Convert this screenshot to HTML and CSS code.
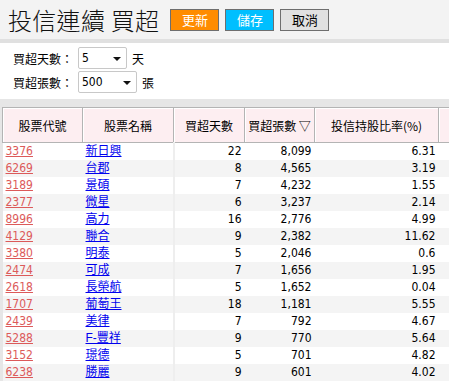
FILE: index.html
```html
<!DOCTYPE html>
<html lang="zh-Hant">
<head>
  <meta charset="UTF-8" />
  <title>投信連續 買超</title>
  <link rel="stylesheet" href="styles.css">
</head>
<body>

<header class="topbar">
  <h1>投信連續 買超</h1>
  <button class="btn btn-orange">更新</button>
  <button class="btn btn-blue">儲存</button>
  <button class="btn btn-gray">取消</button>
</header>

<div class="filters">
  <div class="filter-row">
    <label>買超天數：</label>
    <div class="select small"><span>5</span><span class="arrow"></span></div>
    <span class="unit">天</span>
  </div>
  <div class="filter-row">
    <label>買超張數：</label>
    <div class="select wide"><span>500</span><span class="arrow"></span></div>
    <span class="unit">張</span>
  </div>
</div>

<div class="table-wrap">
  <table class="grid">
    <colgroup>
      <col class="c-code">
      <col class="c-name">
      <col class="c-days">
      <col class="c-lots">
      <col class="c-ratio">
      <col class="c-rest">
    </colgroup>
    <thead>
      <tr>
        <th>股票代號</th>
        <th>股票名稱</th>
        <th>買超天數</th>
        <th>買超張數 ▽</th>
        <th>投信持股比率(%)</th>
        <th></th>
      </tr>
    </thead>
    <tbody id="rows"></tbody>
  </table>
</div>

<script>
  // Stock rows
  const data = [
    ["3376", "新日興", 22, "8,099", "6.31"],
    ["6269", "台郡", 8, "4,565", "3.19"],
    ["3189", "景碩", 7, "4,232", "1.55"],
    ["2377", "微星", 6, "3,237", "2.14"],
    ["8996", "高力", 16, "2,776", "4.99"],
    ["4129", "聯合", 9, "2,382", "11.62"],
    ["3380", "明泰", 5, "2,046", "0.6"],
    ["2474", "可成", 7, "1,656", "1.95"],
    ["2618", "長榮航", 5, "1,652", "0.04"],
    ["1707", "葡萄王", 18, "1,181", "5.55"],
    ["2439", "美律", 7, "792", "4.67"],
    ["5288", "F-豐祥", 9, "770", "5.64"],
    ["3152", "璟德", 5, "701", "4.82"],
    ["6238", "勝麗", 9, "601", "4.02"]
  ];

  const tbody = document.getElementById("rows");
  data.forEach(function(r) {
    const tr = document.createElement("tr");
    tr.innerHTML =
      '<td><a class="code" href="#">' + r[0] + '</a></td>' +
      '<td><a class="name" href="#">' + r[1] + '</a></td>' +
      '<td class="num sep">' + r[2] + '</td>' +
      '<td class="num">' + r[3] + '</td>' +
      '<td class="num">' + r[4] + '</td>' +
      '<td></td>';
    tbody.appendChild(tr);
  });
</script>

</body>
</html>
```

FILE: styles.css
```css
body {
  margin: 0;
  font-family: "DejaVu Sans Condensed", "Liberation Sans", "Noto Sans CJK TC", sans-serif;
  font-size: 12px;
  color: #000;
  background: #fff;
  overflow: hidden;
}

.topbar {
  display: flex;
  align-items: center;
  height: 39px;
  padding-left: 8px;
  background: #f3f3f3;
  border-bottom: 4px solid #e0e0e0;
}

.topbar h1 {
  margin: 0 5px 0 0;
  font-family: "Noto Sans CJK TC", sans-serif;
  font-weight: 300;
  font-size: 24px;
  letter-spacing: 0.3px;
  color: #111;
}

.btn {
  width: 49px;
  height: 22px;
  margin-left: 6px;
  padding: 0;
  border: 1px solid #6e6e6e;
  font-family: "Noto Sans CJK TC", sans-serif;
  font-size: 13px;
  cursor: pointer;
}

.btn-orange {
  background: #ff8c00;
  color: #fff;
}

.btn-blue {
  background: #00bfff;
  color: #fff;
}

.btn-gray {
  background: #e1e1e1;
  color: #000;
}

.filters {
  padding: 4px 0 6px 13px;
  display: flex;
  flex-direction: column;
  gap: 2px;
}

.filter-row {
  display: flex;
  align-items: center;
  height: 22px;
}

.filter-row label {
  width: 65px;
  font-family: "Noto Sans CJK TC", sans-serif;
}

.unit {
  margin-left: 5px;
  font-family: "Noto Sans CJK TC", sans-serif;
}

.select {
  box-sizing: border-box;
  height: 22px;
  border: 1px solid #c8c8c8;
  border-radius: 2px;
  background: #fff;
  display: flex;
  align-items: center;
  justify-content: space-between;
  padding: 0 5px 0 3px;
}

.select.small { width: 49px; }
.select.wide { width: 59px; }

.arrow {
  width: 0;
  height: 0;
  border-left: 4px solid transparent;
  border-right: 4px solid transparent;
  border-top: 4px solid #111;
  margin-top: 2px;
}

.table-wrap {
  background: #e6e6e6;
  padding: 8px 0 0 2px;
}

.grid {
  table-layout: fixed;
  width: 536px;
  border-collapse: collapse;
}

.c-code { width: 80px; }
.c-name { width: 91px; }
.c-days { width: 71px; }
.c-lots { width: 70px; }
.c-ratio { width: 124px; }
.c-rest { width: 100px; }

.grid th {
  height: 34px;
  padding: 0;
  background: #fdeef1;
  border: 1px solid #b4b4b4;
  box-shadow: inset 1px 1px 0 #fff;
  font-family: "Noto Sans CJK TC", sans-serif;
  font-weight: normal;
  font-size: 12px;
  text-align: center;
  white-space: nowrap;
  overflow: hidden;
}

.grid td {
  height: 17px;
  padding: 0 3px;
  line-height: 17px;
  background: #fff;
  white-space: nowrap;
  overflow: hidden;
}

.grid tbody tr:nth-child(even) td {
  background: #f4f4f4;
}

.grid td.num {
  text-align: right;
}

.grid td.sep {
  border-left: 2px solid #eeeeee;
}

.code {
  color: #dc5a5a;
}

.name {
  color: #0000ee;
  font-family: "Liberation Sans", "Noto Sans CJK TC", sans-serif;
}
```
